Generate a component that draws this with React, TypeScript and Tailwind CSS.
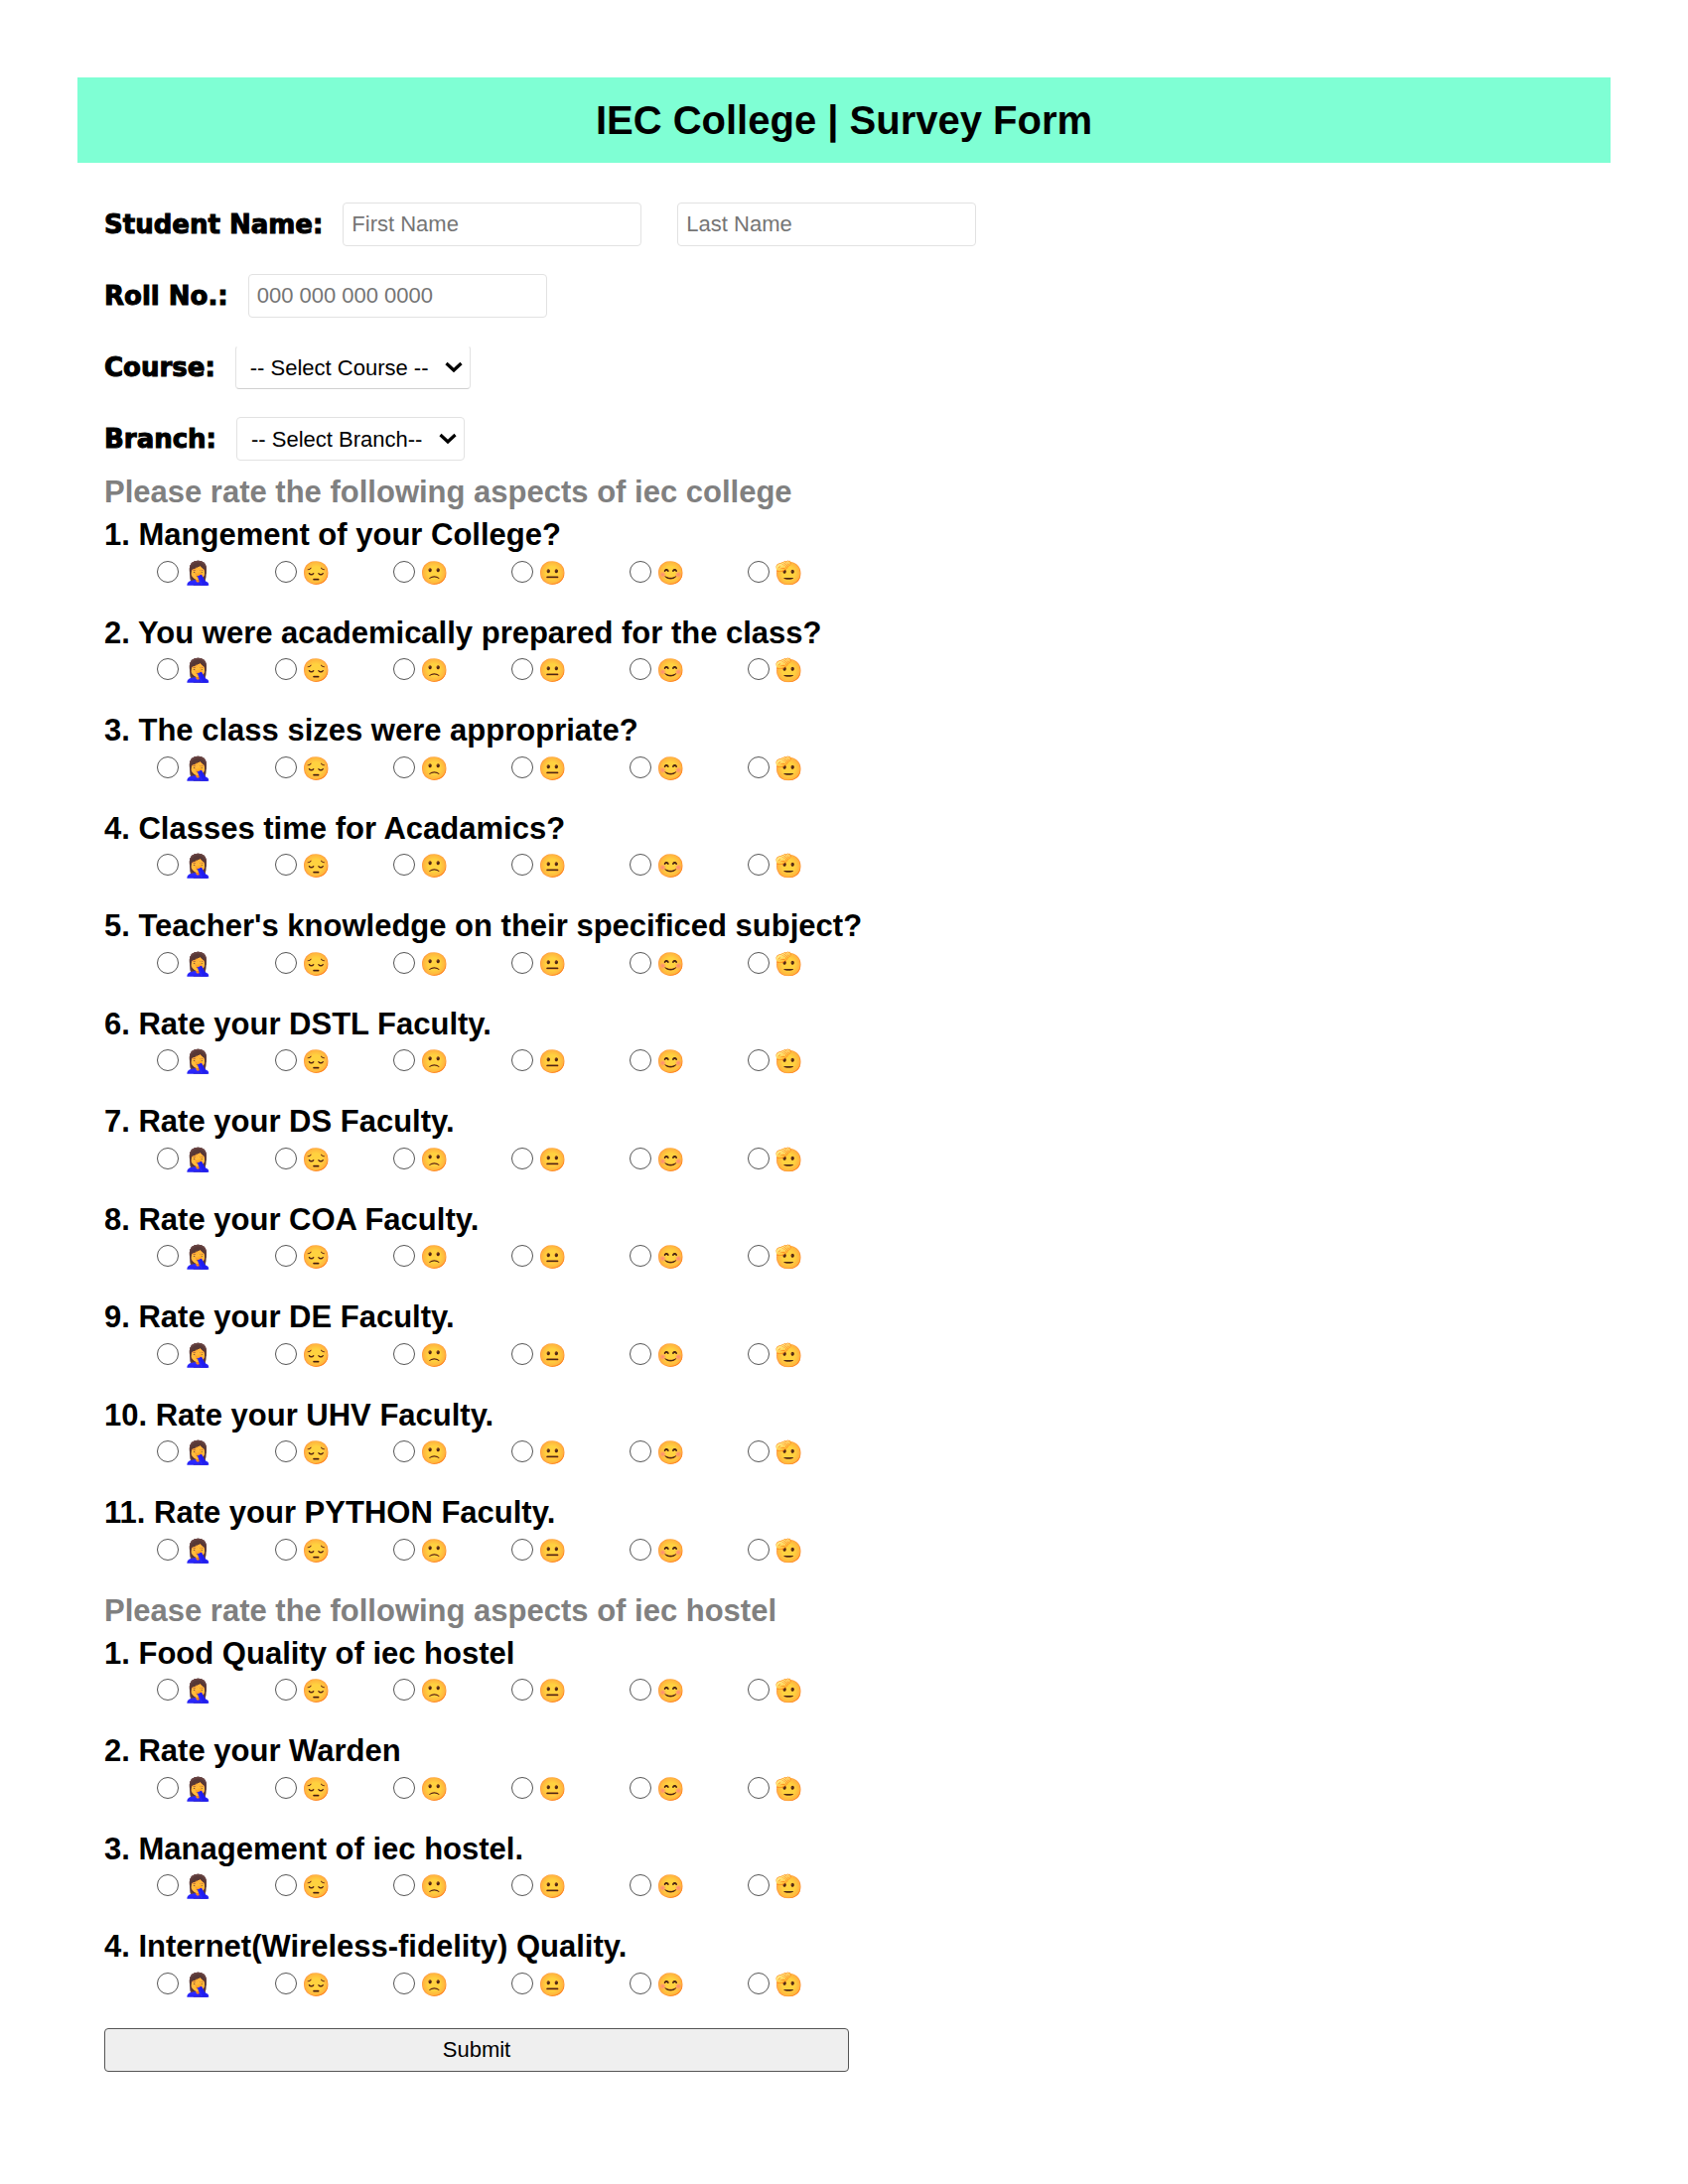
import React from "react";

const collegeQuestions = [
  "Mangement of your College?",
  "You were academically prepared for the class?",
  "The class sizes were appropriate?",
  "Classes time for Acadamics?",
  "Teacher's knowledge on their specificed subject?",
  "Rate your DSTL Faculty.",
  "Rate your DS Faculty.",
  "Rate your COA Faculty.",
  "Rate your DE Faculty.",
  "Rate your UHV Faculty.",
  "Rate your PYTHON Faculty.",
];

const hostelQuestions = [
  "Food Quality of iec hostel",
  "Rate your Warden",
  "Management of iec hostel.",
  "Internet(Wireless-fidelity) Quality.",
];

const ratings = ["🤦‍♀️", "😔", "🙁", "😐", "😊", "🫡"];

const rowClass = "flex flex-wrap items-center gap-x-5";
const labelClass =
  "font-['DejaVu_Sans',sans-serif] text-[26px] leading-[44px] font-black [-webkit-text-stroke:1px_black]";
const boxClass =
  "h-[44px] w-[301px] rounded border border-[#e2e2e2] bg-white px-2 text-[22px] text-black placeholder:text-[#757575]";

function Question({ group, index, text }: { group: string; index: number; text: string }) {
  return (
    <fieldset className="mb-6">
      <legend className="text-[31px] leading-normal font-bold">
        {index + 1}. {text}
      </legend>
      <div className="flex pl-[53px]">
        {ratings.map((rating) => (
          <label key={rating} className="flex h-7 w-[119px] items-center gap-[5px]">
            <input
              type="radio"
              name={`${group}-${index}`}
              value={rating}
              className="mb-0.5 size-[22px] shrink-0 appearance-none rounded-full border border-[#555] bg-white checked:border-[6px] checked:border-[#0075ff]"
            />
            <span className="text-[23px] leading-7 -hue-rotate-15">{rating}</span>
          </label>
        ))}
      </div>
    </fieldset>
  );
}

function Section({ name, title, questions }: { name: string; title: string; questions: string[] }) {
  return (
    <section>
      <h2 className="text-[31px] leading-[40px] font-bold text-[#808080]">{title}</h2>
      {questions.map((q, i) => (
        <Question key={q} group={name} index={i} text={q} />
      ))}
    </section>
  );
}

function SelectBox({ id, placeholder, className }: { id: string; placeholder: string; className: string }) {
  return (
    <div className="relative">
      <select
        id={id}
        className={`h-[44px] appearance-none rounded border border-[#e2e2e2] bg-white pl-[14px] text-[22px] text-black ${className}`}
      >
        <option>{placeholder}</option>
      </select>
      <svg
        viewBox="0 0 18 12"
        className="pointer-events-none absolute top-4 right-2 h-3 w-[18px]"
        fill="none"
        stroke="#000"
        strokeWidth="3.2"
        aria-hidden="true"
      >
        <path d="m1.5 2 7.5 7 7.5-7" />
      </svg>
    </div>
  );
}

export default function App() {
  return (
    <main className="min-h-screen bg-white px-[78px] pt-[78px] pb-12 font-['Liberation_Sans',Arial,sans-serif] text-black">
      <h1 className="bg-[#7fffd4] text-center text-[40px] leading-[86px] font-bold">IEC College | Survey Form</h1>
      <form className="px-[27px] pt-10">
        <div className="flex flex-col gap-7">
          <div className={rowClass}>
            <label htmlFor="first" className={labelClass}>Student Name:</label>
            <div className="flex gap-9">
              <input id="first" placeholder="First Name" className={boxClass} />
              <input id="last" aria-label="Last Name" placeholder="Last Name" className={boxClass} />
            </div>
          </div>
          <div className={rowClass}>
            <label htmlFor="roll" className={labelClass}>Roll No.:</label>
            <input id="roll" placeholder="000 000 000 0000" className={boxClass} />
          </div>
          <div className={rowClass}>
            <label htmlFor="course" className={labelClass}>Course:</label>
            <SelectBox id="course" placeholder="-- Select Course --" className="w-[237px] border-t-white border-b-[#d0d0d0]" />
          </div>
          <div className={rowClass}>
            <label htmlFor="branch" className={labelClass}>Branch:</label>
            <SelectBox id="branch" placeholder="-- Select Branch--" className="w-[230px]" />
          </div>
        </div>
        <div className="flex flex-col gap-[3px] pt-3">
          <Section name="college" title="Please rate the following aspects of iec college" questions={collegeQuestions} />
          <Section name="hostel" title="Please rate the following aspects of iec hostel" questions={hostelQuestions} />
        </div>
        <button
          type="submit"
          className="mt-1.5 h-[44px] w-full max-w-[750px] rounded border border-[#555] bg-[#efefef] text-[22px]"
        >
          Submit
        </button>
      </form>
    </main>
  );
}
